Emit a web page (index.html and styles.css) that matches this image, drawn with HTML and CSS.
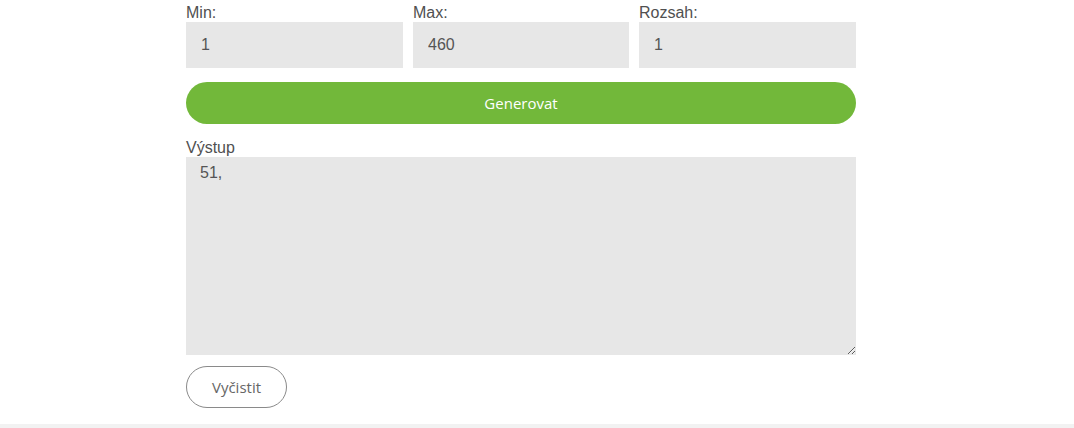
FILE: index.html
```html
<!DOCTYPE html>
<html lang="cs">
<head>
<meta charset="utf-8">
<title>Generátor</title>
<link rel="stylesheet" href="styles.css">
</head>
<body>
<main class="page">
  <div class="gen">
    <div class="fields">
      <label class="field">
        <span class="label">Min:</span>
        <input class="input" type="text" value="1">
      </label>
      <label class="field">
        <span class="label">Max:</span>
        <input class="input" type="text" value="460">
      </label>
      <label class="field">
        <span class="label">Rozsah:</span>
        <input class="input" type="text" value="1">
      </label>
    </div>
    <button class="btn-primary" type="button">Generovat</button>
    <label class="output">
      <span class="label">Výstup</span>
      <textarea class="textarea">51,</textarea>
    </label>
    <button class="btn-outline" type="button">Vyčistit</button>
  </div>
</main>
<footer class="footer"></footer>
</body>
</html>
```
FILE: styles.css
```css
html, body {
  margin: 0;
  padding: 0;
  background: #fff;
}
body {
  font-family: "Liberation Sans", Arial, sans-serif;
  color: #4f4f4f;
  overflow: hidden;
}
.page {
  height: 424px;
  box-sizing: border-box;
  padding-top: 3px;
}
.gen {
  width: 670px;
  margin-left: 186px;
  display: flex;
  flex-direction: column;
}
.fields {
  display: grid;
  grid-template-columns: 217px 216px 217px;
  column-gap: 10px;
}
.field, .output {
  display: flex;
  flex-direction: column;
}
.label {
  font-size: 16px;
  line-height: 19px;
  color: #505050;
}
.input {
  height: 46px;
  box-sizing: border-box;
  border: none;
  outline: none;
  background: #e7e7e7;
  padding: 0 15px;
  font-family: "Liberation Sans", Arial, sans-serif;
  font-size: 16px;
  color: #555;
  width: 100%;
}
.btn-primary {
  margin-top: 14px;
  height: 42px;
  border: none;
  border-radius: 21px;
  background: #72b83a;
  color: #fff;
  font-family: "Open Sans", sans-serif;
  font-size: 15px;
  cursor: pointer;
}
.output {
  margin-top: 14px;
}
.textarea {
  height: 198px;
  box-sizing: border-box;
  border: none;
  outline: none;
  background: #e7e7e7;
  padding: 6px 14px;
  font-family: "Liberation Sans", Arial, sans-serif;
  font-size: 16px;
  line-height: 20px;
  color: #555;
  resize: vertical;
  width: 100%;
}
.btn-outline {
  align-self: flex-start;
  margin-top: 11px;
  width: 101px;
  height: 42px;
  border: 1px solid #8a8a8a;
  border-radius: 21px;
  background: #fff;
  color: #666;
  font-family: "Open Sans", sans-serif;
  font-size: 15px;
  cursor: pointer;
}
.footer {
  height: 4px;
  background: #f2f2f2;
}
```
